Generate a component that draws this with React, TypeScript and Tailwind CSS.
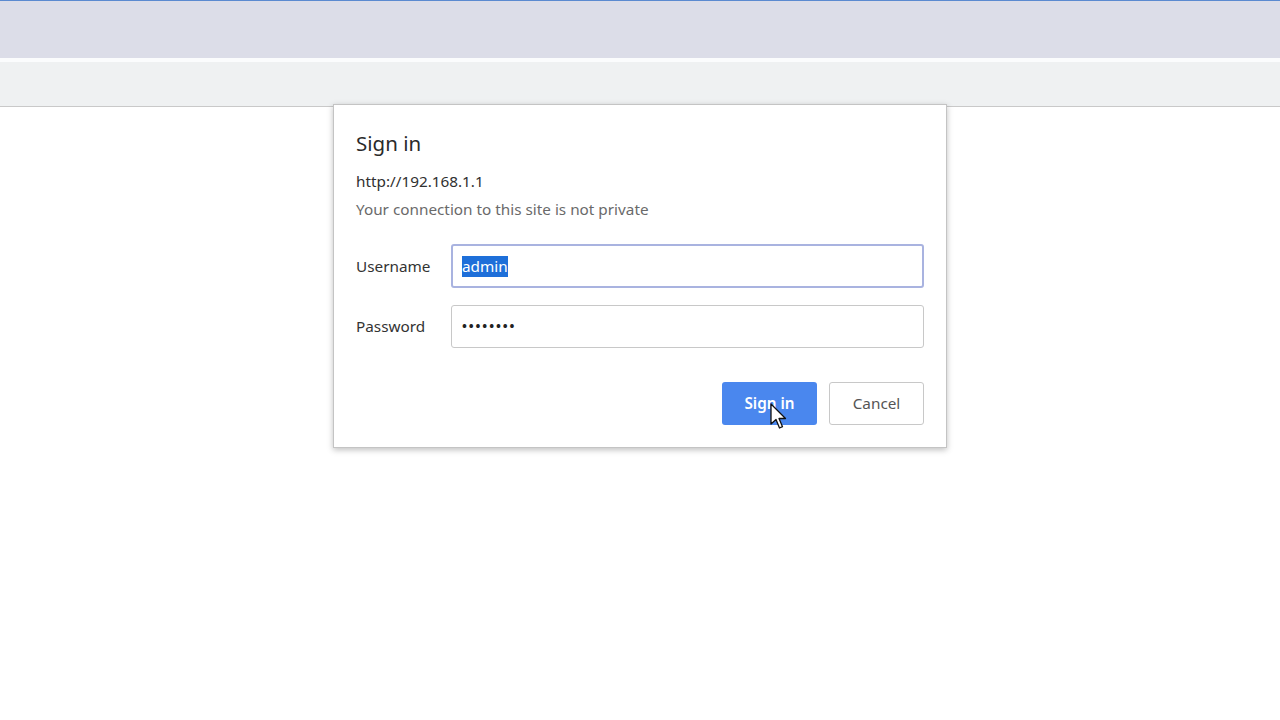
import React from "react";

export default function App() {
  return (
    <div
      className="relative w-full h-[720px] bg-white overflow-hidden"
      style={{ fontFamily: '"Noto Sans", "Open Sans", sans-serif' }}
    >
      <div className="h-px bg-[#5b8ad0]" />
      <div className="h-[57px] bg-[#dcdde8]" />
      <div className="h-[4px] bg-[#fbfcfd]" />
      <div className="h-[45px] bg-[#eff1f2] border-b border-[#c9c9c9]" />

      <div className="absolute left-[333px] top-[104px] w-[614px] h-[344px] bg-white border border-[#c4c4c4] shadow-[0_2px_6px_rgba(0,0,0,0.25)] pl-[22px] pr-[22px] pt-[24px] flex flex-col">
        <div className="text-[20.5px] leading-[28px] text-[#2a2a2a]">Sign in</div>
        <div className="mt-[14px] text-[15.3px] leading-[20px] text-[#303030]">http://192.168.1.1</div>
        <div className="mt-[8px] text-[15.3px] leading-[20px] text-[#6a6a6a]">Your connection to this site is not private</div>

        <div className="mt-[25px] flex items-center">
          <div className="w-[95px] text-[15.3px] text-[#333]">Username</div>
          <div className="w-[473px] h-[44px] rounded-[3px] border-2 border-[#a9b3e0] flex items-center pl-[9px]">
            <span className="bg-[#1e6fd9] text-white text-[15.3px] leading-[21px]">admin</span>
          </div>
        </div>

        <div className="mt-[17px] flex items-center">
          <div className="w-[95px] text-[15.3px] text-[#333]">Password</div>
          <div className="w-[473px] h-[43px] rounded-[3px] border border-[#c8c8c8] flex items-center pl-[10px]">
            <span className="text-[13px] tracking-[1.9px] font-bold text-[#222]">••••••••</span>
          </div>
        </div>

        <div className="mt-[34px] flex justify-end gap-[12px]">
          <div className="relative w-[95px] h-[43px] rounded-[3px] bg-[#4a87ee] text-white text-[15.3px] font-semibold flex items-center justify-center">
            Sign in
            <svg
              className="absolute left-[48px] top-[21px]"
              width="18"
              height="28"
              viewBox="0 0 18 28"
            >
              <path
                d="M1 1 L1 21 L6 16.5 L9.5 25 L12.5 23.7 L9 15.5 L15.5 15.5 Z"
                fill="white"
                stroke="#111"
                strokeWidth="1.3"
                strokeLinejoin="round"
              />
            </svg>
          </div>
          <div className="w-[95px] h-[43px] rounded-[3px] border border-[#c8c8c8] bg-white text-[#555] text-[15.3px] flex items-center justify-center">
            Cancel
          </div>
        </div>
      </div>
    </div>
  );
}
